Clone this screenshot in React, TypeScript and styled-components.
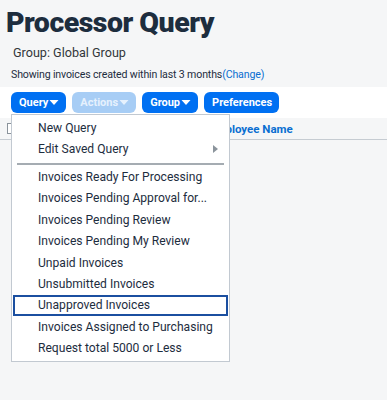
import React from 'react'
import styled, { createGlobalStyle } from 'styled-components'

const GlobalStyle = createGlobalStyle`
	body {
		margin: 0;
		background: #f5f6f7;
		font-family: Roboto, 'Liberation Sans', sans-serif;
		color: #1d2d3e;
	}
`

const Page = styled.div`
	width: 387px;
	height: 400px;
	overflow: hidden;
	display: flex;
	flex-direction: column;
`

const Title = styled.h1`
	margin: 0;
	padding: 5px 0 0 6px;
	font-family: Roboto, sans-serif;
	font-weight: 900;
	font-size: 28.5px;
	line-height: 36px;
	color: #1d2d3e;
	letter-spacing: -0.5px;
`

const GroupLine = styled.div`
	padding: 3px 0 0 13px;
	font-size: 12.6px;
	line-height: 18px;
	color: #32363a;
`

const Showing = styled.div`
	padding: 5px 0 0 11px;
	font-size: 10.6px;
	line-height: 16px;
	letter-spacing: -0.15px;
	color: #1d2d3e;
`

const Link = styled.a`
	color: #0a6ed1;
	text-decoration: none;
`

const Toolbar = styled.div`
	margin-top: 4px;
	height: 31px;
	background: #ffffff;
	display: flex;
	align-items: center;
	gap: 6px;
	padding: 0 11px 0 11px;
	box-sizing: border-box;
	position: relative;
`

const Button = styled.button<{ $disabled?: boolean }>`
	height: 21px;
	border: none;
	border-radius: 6px;
	padding: 0 7px 0 8px;
	background: ${p => (p.$disabled ? '#a7cdf5' : '#0070f2')};
	color: ${p => (p.$disabled ? '#e6f1fd' : '#ffffff')};
	font-family: Roboto, sans-serif;
	font-weight: 700;
	font-size: 11px;
	display: flex;
	align-items: center;
	gap: 1px;
	cursor: pointer;
`

const Caret = styled.svg`
	width: 10px;
	height: 7px;
	fill: currentColor;
`

const Menu = styled.div`
	position: absolute;
	left: 11px;
	top: 27px;
	width: 219px;
	background: #ffffff;
	border: 1px solid #c2c9d1;
	box-sizing: border-box;
	padding: 2px 0 2px 0;
	z-index: 5;
`

const Item = styled.div<{ $selected?: boolean }>`
	height: 21.4px;
	display: flex;
	align-items: center;
	justify-content: space-between;
	padding: 0 10px 0 25px;
	margin: 0 1px;
	font-size: 12.1px;
	color: #1d2d3e;
	box-sizing: border-box;
	white-space: nowrap;
	outline: ${p => (p.$selected ? '2px solid #1b4fa0' : 'none')};
	outline-offset: -2px;
`

const SubArrow = styled.span`
	width: 0;
	height: 0;
	border-top: 4px solid transparent;
	border-bottom: 4px solid transparent;
	border-left: 5px solid #8b949c;
`

const Separator = styled.div`
	height: 2px;
	background: #8e979f;
	margin: 3px 5px 1.5px 5px;
	opacity: 0.8;
`

const HeaderRow = styled.div`
	height: 21px;
	background: #f5f6f7;
	border-bottom: 1px solid #c6ccd2;
	display: flex;
	align-items: center;
	padding-left: 7px;
`

const Check = styled.span`
	width: 9px;
	height: 11px;
	border: 1px solid #8a939b;
	box-sizing: border-box;
	background: #fff;
`

const ColHead = styled.span`
	margin-left: 193px;
	font-weight: 700;
	font-size: 11.5px;
	color: #0a6ed1;
`

const Body = styled.div`
	flex: 1;
	background: #f5f6f7;
`

const caret = (
	<Caret viewBox="0 0 10 7">
		<path d="M0.5 1 L9.5 1 L5 6 Z" />
	</Caret>
)

const items = [
	'Invoices Ready For Processing',
	'Invoices Pending Approval for...',
	'Invoices Pending Review',
	'Invoices Pending My Review',
	'Unpaid Invoices',
	'Unsubmitted Invoices',
	'Unapproved Invoices',
	'Invoices Assigned to Purchasing',
	'Request total 5000 or Less',
]

export default function App() {
	return (
		<Page>
			<GlobalStyle />
			<Title>Processor Query</Title>
			<GroupLine>Group: Global Group</GroupLine>
			<Showing>
				Showing invoices created within last 3 months<Link>(Change)</Link>
			</Showing>
			<Toolbar>
				<Button>Query{caret}</Button>
				<Button $disabled>Actions{caret}</Button>
				<Button>Group{caret}</Button>
				<Button>Preferences</Button>
				<Menu>
					<Item>New Query</Item>
					<Item>
						Edit Saved Query
						<SubArrow />
					</Item>
					<Separator />
					{items.map(t => (
						<Item key={t} $selected={t === 'Unapproved Invoices'}>
							{t}
						</Item>
					))}
				</Menu>
			</Toolbar>
			<HeaderRow>
				<Check />
				<ColHead>Employee Name</ColHead>
			</HeaderRow>
			<Body />
		</Page>
	)
}
